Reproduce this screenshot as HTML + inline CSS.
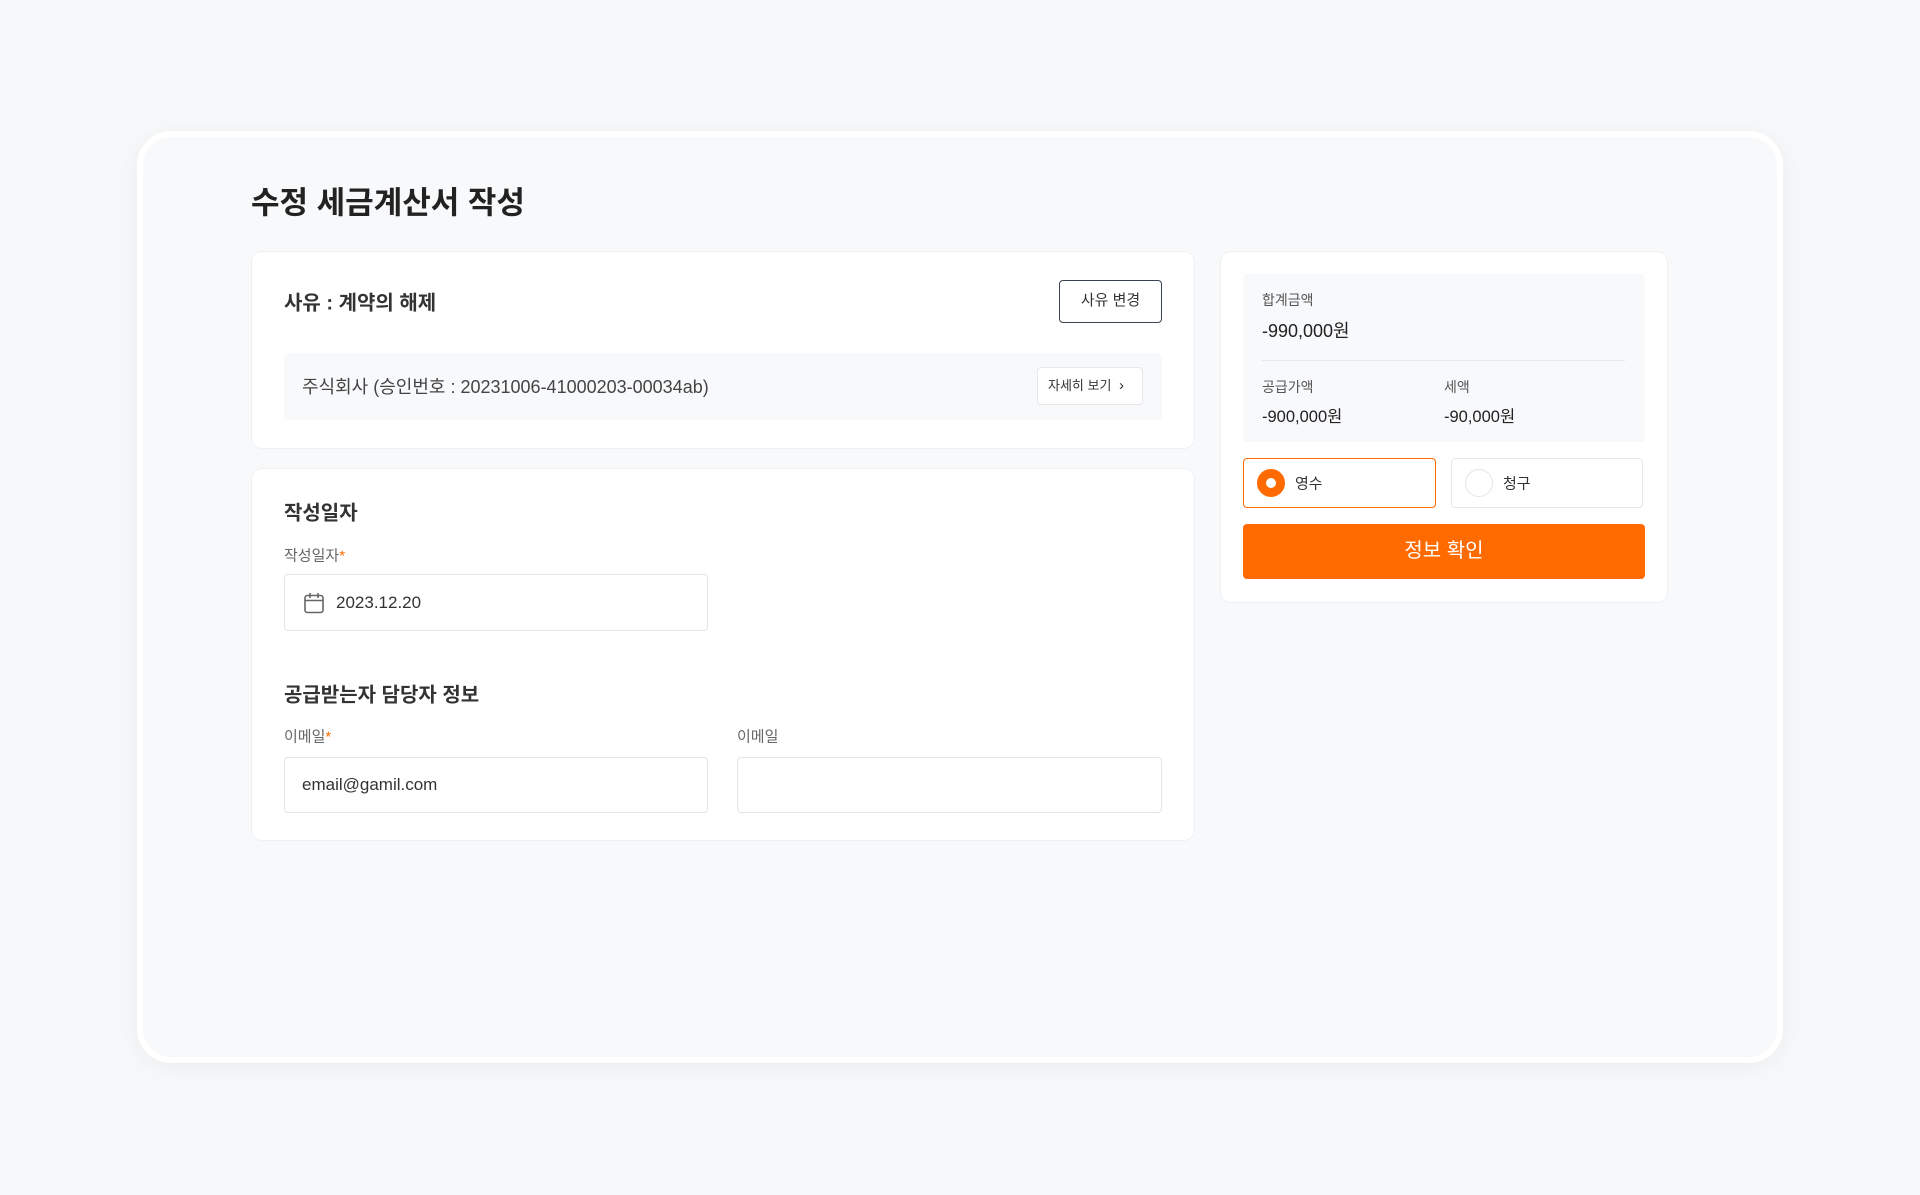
<!DOCTYPE html>
<html lang="ko"><head><meta charset="utf-8">
<style>
*{box-sizing:border-box;margin:0;padding:0}
body{width:1920px;height:1195px;background:#f7f8f9;font-family:"Liberation Sans","Noto Sans CJK KR",sans-serif;color:#222;position:relative;overflow:hidden}
.abs{position:absolute}
.outer{left:137px;top:131px;width:1646px;height:932px;background:#f8f9fa;border:6px solid #fff;border-radius:34px;box-shadow:0 4px 24px rgba(0,0,0,.05)}
.card{background:#fff;border-radius:10px;box-shadow:0 0 0 1px #eef0f2}
.t{position:absolute;white-space:nowrap;transform:translateY(-50%)}
.inp{position:absolute;background:#fff;border:1px solid #e3e5e8;border-radius:4px}
</style></head><body>
<div class="abs outer"></div>
<div class="t" style="left:251px;top:200px;font-size:31px;font-weight:bold;color:#222">수정 세금계산서 작성</div>

<div class="abs card" style="left:252px;top:252px;width:942px;height:196px"></div>
<div class="t" style="left:284px;top:301px;font-size:20px;font-weight:bold;color:#333">사유 : 계약의 해제</div>
<div class="abs" style="left:1059px;top:280px;width:103px;height:43px;border:1.5px solid #3a4350;border-radius:4px;background:#fff;font-size:15px;color:#333;text-align:center;line-height:40px">사유 변경</div>
<div class="abs" style="left:284px;top:353px;width:878px;height:67px;background:#f8f9fb;border-radius:4px"></div>
<div class="t" style="left:302px;top:386px;font-size:18px;color:#444">주식회사 (승인번호 : 20231006-41000203-00034ab)</div>
<div class="abs" style="left:1037px;top:367px;width:106px;height:38px;background:#fff;border:1px solid #e5e7eb;border-radius:4px;font-size:13px;color:#333;line-height:36px;padding-left:10px">자세히 보기 <span style="font-size:15px;margin-left:4px">›</span></div>

<div class="abs card" style="left:252px;top:469px;width:942px;height:371px"></div>
<div class="t" style="left:284px;top:511px;font-size:20px;font-weight:bold;color:#333">작성일자</div>
<div class="t" style="left:284px;top:555px;font-size:15px;color:#666">작성일자<span style="color:#ff6b00">*</span></div>
<div class="inp" style="left:284px;top:574px;width:424px;height:57px"></div>
<svg class="abs" style="left:303px;top:592px" width="22" height="22" viewBox="0 0 22 22" fill="none" stroke="#666" stroke-width="1.6"><rect x="2" y="3.5" width="18" height="17" rx="2.5"/><path d="M2 8.5h18M7 1v5M15 1v5"/></svg>
<div class="t" style="left:336px;top:603px;font-size:17px;color:#333">2023.12.20</div>
<div class="t" style="left:284px;top:693px;font-size:20px;font-weight:bold;color:#333">공급받는자 담당자 정보</div>
<div class="t" style="left:284px;top:736px;font-size:15px;color:#666">이메일<span style="color:#ff6b00">*</span></div>
<div class="t" style="left:737px;top:736px;font-size:15px;color:#666">이메일</div>
<div class="inp" style="left:284px;top:757px;width:424px;height:56px"></div>
<div class="t" style="left:302px;top:785px;font-size:17px;color:#333">email@gamil.com</div>
<div class="inp" style="left:737px;top:757px;width:425px;height:56px"></div>

<div class="abs card" style="left:1221px;top:252px;width:446px;height:350px"></div>
<div class="abs" style="left:1243px;top:274px;width:402px;height:168px;background:#f8f9fb;border-radius:4px"></div>
<div class="t" style="left:1262px;top:300px;font-size:14px;color:#555">합계금액</div>
<div class="t" style="left:1262px;top:330px;font-size:18px;color:#222">-990,000원</div>
<div class="abs" style="left:1262px;top:360px;width:363px;height:1px;background:#e6e8eb"></div>
<div class="t" style="left:1262px;top:387px;font-size:14px;color:#555">공급가액</div>
<div class="t" style="left:1262px;top:415px;font-size:16.5px;color:#222">-900,000원</div>
<div class="t" style="left:1444px;top:387px;font-size:14px;color:#555">세액</div>
<div class="t" style="left:1444px;top:415px;font-size:16.5px;color:#222">-90,000원</div>
<div class="abs" style="left:1243px;top:458px;width:193px;height:50px;border:1.5px solid #ff6b00;border-radius:4px;background:#fff"></div>
<div class="abs" style="left:1257px;top:469px;width:28px;height:28px;border-radius:50%;border:9px solid #ff6b00;background:#fff"></div>
<div class="t" style="left:1295px;top:483px;font-size:15px;color:#333">영수</div>
<div class="abs" style="left:1451px;top:458px;width:192px;height:50px;border:1px solid #e5e7eb;border-radius:4px;background:#fff"></div>
<div class="abs" style="left:1465px;top:469px;width:28px;height:28px;border-radius:50%;border:1px solid #e3e5e8;background:#fff"></div>
<div class="t" style="left:1503px;top:483px;font-size:15px;color:#333">청구</div>
<div class="abs" style="left:1243px;top:524px;width:402px;height:55px;background:#ff6b00;border-radius:4px;color:#fff;font-size:20px;text-align:center;line-height:55px">정보 확인</div>
</body></html>
